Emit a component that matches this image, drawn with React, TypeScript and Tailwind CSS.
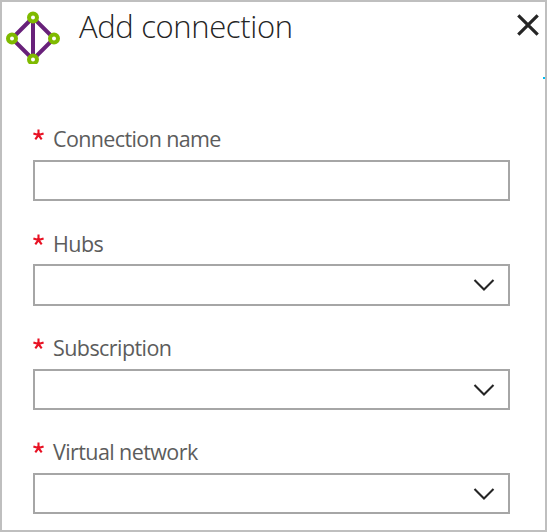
type Field = { label: string; select: boolean; spacing: string; box: string; tracking: string };

const fields: Field[] = [
  { label: "Connection name", select: false, spacing: "mb-[28px]", box: "mt-[5px] h-[41px]", tracking: "tracking-[-0.62px]" },
  { label: "Hubs", select: true, spacing: "mb-[27px]", box: "mt-[4px] h-[42px]", tracking: "tracking-[-0.55px]" },
  { label: "Subscription", select: true, spacing: "mb-[27px]", box: "mt-[5px] h-[41px]", tracking: "tracking-[-0.57px]" },
  { label: "Virtual network", select: true, spacing: "", box: "mt-[5px] h-[41px]", tracking: "tracking-[-0.59px]" },
];

function HubIcon() {
  const nodes = [[33, 17.5], [12, 38.5], [54, 38.5], [33, 59.5]];
  return (
    <svg width="56" height="60" viewBox="5 4 56 60" className="shrink-0">
      <path d="M33 17.5 12 38.5 33 59.5 54 38.5ZM33 17.5V59.5" fill="none" stroke="#68217a" strokeWidth="4" />
      {nodes.map(([x, y]) => (
        <circle key={`${x}-${y}`} cx={x} cy={y} r="4" fill="white" stroke="#7fba00" strokeWidth="4" />
      ))}
    </svg>
  );
}

function Asterisk() {
  return (
    <svg width="12" height="12" viewBox="0 0 12 12" className="mt-[5px] mr-2 shrink-0">
      <path d="M5.5 6V.5M5.5 6 .4 4.4M5.5 6 10.6 4.4M5.5 6 2.3 10.3M5.5 6 8.7 10.3" stroke="#e81123" strokeWidth="2.1" fill="none" />
    </svg>
  );
}

export default function App() {
  return (
    <main className="h-[532px] w-[547px] overflow-hidden border-2 border-[#bfbfbf] bg-white font-['Open_Sans','Noto_Sans',sans-serif]">
      <header className="relative flex h-[122px] items-start pt-[2px] pl-[3px]">
        <HubIcon />
        <h1 className="ml-[18px] pt-[1px] text-[31px] leading-[42px] font-light tracking-[-0.36px] whitespace-nowrap text-[#252525]">
          Add connection
        </h1>
        <button aria-label="Close" className="absolute top-[12px] left-[515px]">
          <svg width="22" height="22" viewBox="0 0 22 22" className="block">
            <path d="M1.3 1.3 20.7 20.7M20.7 1.3 1.3 20.7" stroke="#252525" strokeWidth="3.2" />
          </svg>
        </button>
        <span className="absolute top-[75px] right-0 h-[2px] w-[2px] bg-[#00bcf2]" />
      </header>
      <form className="flex flex-col pr-[35px] pl-[31px]">
        {fields.map((f) => (
          <div key={f.label} className={f.spacing}>
            <label className="flex h-[31px] items-start">
              <Asterisk />
              <span className={`text-[21.5px] leading-[30px] whitespace-nowrap text-[#5c5c5c] ${f.tracking}`}>{f.label}</span>
            </label>
            <div className={`flex items-center justify-end border-2 border-[#a6a6a6] pr-[13px] ${f.box}`}>
              {f.select && (
                <svg width="22" height="14" viewBox="0 0 22 14">
                  <path d="M1.5 2 11 11.5 20.5 2" fill="none" stroke="#252525" strokeWidth="2.1" />
                </svg>
              )}
            </div>
          </div>
        ))}
      </form>
    </main>
  );
}
